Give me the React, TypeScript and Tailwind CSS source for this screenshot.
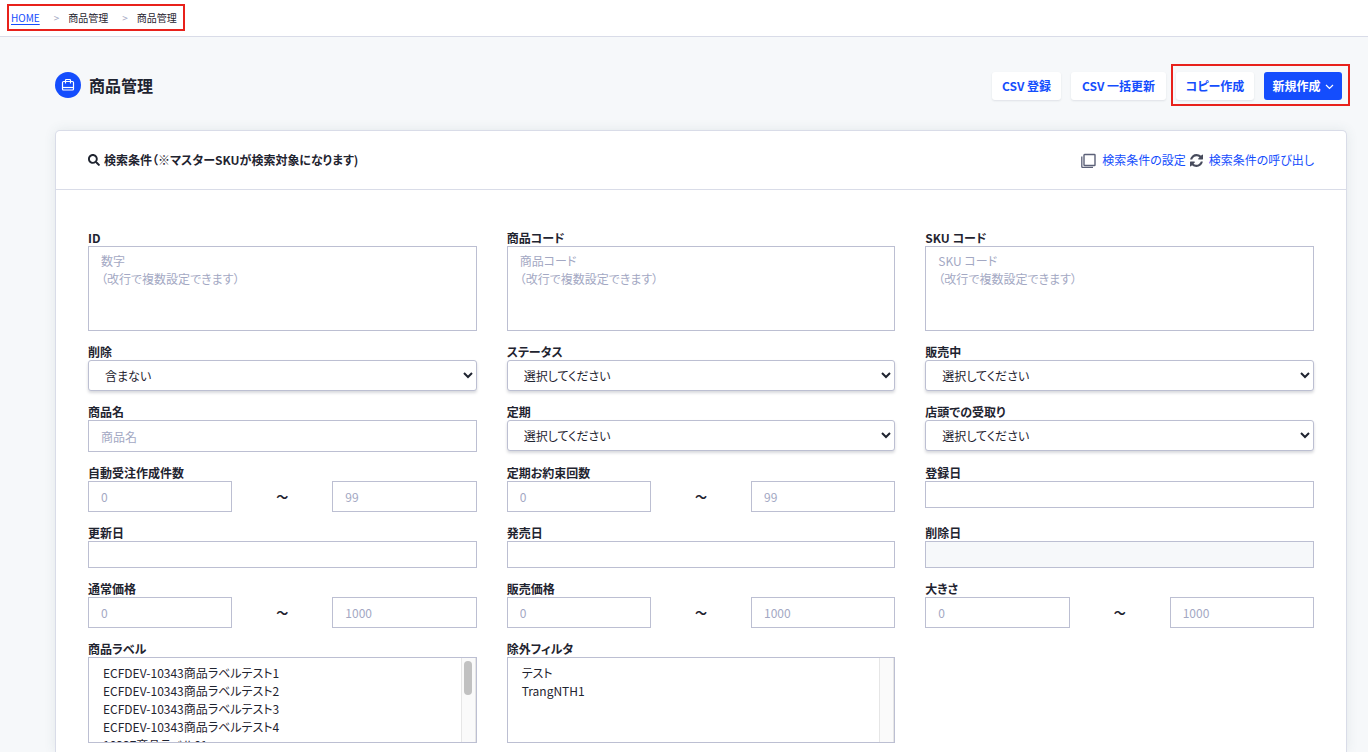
import type { ReactNode } from "react"
import { FaSearch } from "react-icons/fa"

const HINT = "（改行で複数設定できます）"

const labels = [
  "ECFDEV-10343商品ラベルテスト1",
  "ECFDEV-10343商品ラベルテスト2",
  "ECFDEV-10343商品ラベルテスト3",
  "ECFDEV-10343商品ラベルテスト4",
  "10337商品ラベル01",
  "10337商品ラベル02",
  "10337商品ラベル03",
  "10337商品ラベル04",
  "10337商品ラベル05",
  "10337商品ラベル06",
]

const excludeFilters = ["テスト", "TrangNTH1"]

const boxClass =
  "block w-full border border-[#bcbfd2] bg-white px-3 text-xs leading-[18px] text-[#1f2430] placeholder:text-[#a3a8c3] disabled:bg-[#f6f8fa]"

function Field({ id, label, children }: { id: string; label: string; children: ReactNode }) {
  return (
    <div>
      <label htmlFor={id} className="block pb-[2px] text-xs leading-[13px] font-bold">
        {label}
      </label>
      {children}
    </div>
  )
}

function AreaField({ id, label, placeholder }: { id: string; label: string; placeholder: string }) {
  return (
    <Field id={id} label={label}>
      <textarea id={id} placeholder={`${placeholder}\n${HINT}`} className={`${boxClass} h-[85px] resize-none py-[5px]`} />
    </Field>
  )
}

function SelectField({ id, label, value = "選択してください" }: { id: string; label: string; value?: string }) {
  return (
    <Field id={id} label={label}>
      <select
        id={id}
        className="block h-[31px] w-full rounded-[3px] border border-[#bcbfd2] bg-white pl-3 text-xs text-[#1f2430] shadow-[0_2px_3px_rgba(60,66,87,0.2)]"
      >
        <option>{value}</option>
      </select>
    </Field>
  )
}

function RangeField({ id, label, max }: { id: string; label: string; max: string }) {
  return (
    <Field id={`${id}-from`} label={label}>
      <div className="flex items-center">
        <div className="flex-1">
          <input id={`${id}-from`} type="text" placeholder="0" className={`${boxClass} h-[31px]`} />
        </div>
        <span className="w-[100px] text-center text-xs leading-[18px] font-bold">～</span>
        <div className="flex-1">
          <input id={`${id}-to`} type="text" placeholder={max} aria-label={`${label} 上限`} className={`${boxClass} h-[31px]`} />
        </div>
      </div>
    </Field>
  )
}

function DateField({ id, label, disabled }: { id: string; label: string; disabled?: boolean }) {
  return (
    <Field id={id} label={label}>
      <input id={id} type="text" disabled={disabled} className={`${boxClass} h-[27px]`} />
    </Field>
  )
}

function ListField({ id, label, options }: { id: string; label: string; options: string[] }) {
  return (
    <Field id={id} label={label}>
      <div className="flex h-[86px] border border-[#bcbfd2] bg-white">
        <select
          id={id}
          multiple
          className="block h-full min-w-0 flex-1 overflow-y-auto py-[6px] pl-3 text-xs text-[#1f2430] [scrollbar-width:none]"
        >
          {options.map((option) => (
            <option key={option} className="h-[18px] min-h-[18px] px-[2px] py-0 leading-[18px]">
              {option}
            </option>
          ))}
        </select>
        {/* Scroll rail, the thumb only shows when the list overflows */}
        <div className="flex w-[15px] justify-center border-x border-[#e6e6e6] bg-[#fafafa] pt-[3px]" aria-hidden="true">
          {options.length > 4 && <div className="h-[34px] w-2 rounded-full bg-[#c1c1c1]" />}
        </div>
      </div>
    </Field>
  )
}

function BriefcaseIcon() {
  return (
    <svg viewBox="0 0 14 14" className="size-[14px]" fill="none" stroke="currentColor" strokeWidth="1.2" aria-hidden="true">
      <path d="M4.500 5.600V2.300a.8.8 0 0 1 .8-.8h3.400a.8.8 0 0 1 .8.8v3.300" />
      <rect x="1.500" y="3.500" width="11" height="8.500" rx="1" />
      <path d="M1.500 9.500h11" />
    </svg>
  )
}

function CopyIcon() {
  return (
    <svg viewBox="0 0 15 15" className="size-[15px] text-[#5c6178]" fill="none" stroke="currentColor" aria-hidden="true">
      <rect x="3" y="1.500" width="11" height="11" rx=".6" strokeWidth="1.400" />
      <path d="M.8 3.500v10.200a.6.6 0 0 0 .6.6H12" strokeWidth="1.300" />
    </svg>
  )
}

function RefreshIcon() {
  return (
    <svg viewBox="0 0 1536 1536" className="size-[13px] text-[#474b5c]" fill="currentColor" aria-hidden="true">
      <path d="M1511 928q0 5-1 7-64 268-268 434.500T764 1536q-146 0-282.500-55T238 1324l-129 129q-19 19-45 19t-45-19-19-45V960q0-26 19-45t45-19h448q26 0 45 19t19 45-19 45l-137 137q71 66 161 102t187 36q134 0 250-65t186-179q11-17 53-117 8-23 30-23h192q13 0 22.500 9.500t9.500 22.500zm25-800v448q0 26-19 45t-45 19h-448q-26 0-45-19t-19-45 19-45l138-138Q969 256 768 256q-134 0-250 65T332 500q-11 17-53 117-8 23-30 23H50q-13 0-22.500-9.500T18 608v-7q65-268 270-434.500T768 0q146 0 284 55.500T1297 212l130-129q19-19 45-19t45 19 19 45z" />
    </svg>
  )
}

const whiteButton =
  "h-7 rounded-[3px] bg-white text-xs font-bold text-[#144dfd] shadow-[0_1px_2px_rgba(60,66,87,0.12)]"

export default function App() {
  return (
    <div className="min-h-screen bg-[#f6f8fa] font-['Noto_Sans_CJK_JP',sans-serif] text-[#1f2430] [font-feature-settings:'palt']">
      {/* Breadcrumb */}
      <header className="flex border-b border-[#d9dce8] bg-white px-[7px] pt-1 pb-[5px]">
        <nav className="flex items-center border-2 border-[#e8211b] py-1 pr-[6px] pl-[2px] text-[10px] leading-[15px]">
          <a href="#" className="text-[#144dfd] underline underline-offset-2">
            HOME
          </a>
          <span className="pr-[9px] pl-[14px] text-[#a3a8c3]">&gt;</span>
          <span>商品管理</span>
          <span className="pr-[9px] pl-[14px] text-[#a3a8c3]">&gt;</span>
          <span>商品管理</span>
        </nav>
      </header>

      <main className="pt-[27px] pl-[55px]">
        {/* Page title and actions */}
        <div className="flex items-center justify-between pr-[18px]">
          <div className="flex items-center gap-2">
            <span className="flex size-[26px] items-center justify-center rounded-full bg-[#144dfd] text-white">
              <BriefcaseIcon />
            </span>
            <h1 className="text-base leading-6 font-bold">商品管理</h1>
          </div>
          <div className="flex items-center">
            <div className="flex gap-[10px] pt-[2px]">
              <button type="button" className={`${whiteButton} w-[69px]`}>
                CSV 登録
              </button>
              <button type="button" className={`${whiteButton} w-[95px]`}>
                CSV 一括更新
              </button>
            </div>
            <div className="ml-[5px] flex gap-[10px] border-2 border-[#e8211b] pt-[6px] pr-[6px] pb-1 pl-[3px]">
              <button type="button" className={`${whiteButton} w-[78px]`}>
                コピー作成
              </button>
              <button
                type="button"
                className="flex h-7 w-[78px] items-center justify-center gap-1 rounded-[3px] bg-[#144dfd] text-xs font-bold text-white"
              >
                新規作成
                <svg viewBox="0 0 9 9" className="size-[9px]" fill="none" stroke="currentColor" strokeWidth="1.2" aria-hidden="true">
                  <path d="m1 3 3.500 3.500L8 3" />
                </svg>
              </button>
            </div>
          </div>
        </div>

        {/* Search conditions */}
        <section className="mt-6 mr-[21px] rounded-t-[5px] border border-b-0 border-[#d9dce8] bg-white shadow-[0_0_12px_rgba(60,90,100,0.1)]">
          <div className="flex h-[59px] items-center justify-between border-b border-[#d9dce8] px-8">
            <h2 className="flex items-center gap-1 text-xs leading-[18px] font-bold">
              <FaSearch className="size-3" />
              検索条件（※マスターSKUが検索対象になります)
            </h2>
            <div className="flex items-center gap-1 text-xs leading-[18px]">
              <a href="#" className="flex items-center gap-[6px] text-[#144dfd]">
                <CopyIcon />
                検索条件の設定
              </a>
              <a href="#" className="flex items-center gap-[6px] text-[#144dfd]">
                <RefreshIcon />
                検索条件の呼び出し
              </a>
            </div>
          </div>

          <form className="grid grid-cols-3 gap-x-[30px] gap-y-[14px] px-8 pt-[41px] pb-[9px]">
            <AreaField id="product-id" label="ID" placeholder="数字" />
            <AreaField id="product-code" label="商品コード" placeholder="商品コード" />
            <AreaField id="sku-code" label="SKU コード" placeholder="SKU コード" />

            <SelectField id="deleted" label="削除" value="含まない" />
            <SelectField id="status" label="ステータス" />
            <SelectField id="on-sale" label="販売中" />

            <Field id="product-name" label="商品名">
              <input id="product-name" type="text" placeholder="商品名" className={`${boxClass} h-8`} />
            </Field>
            <SelectField id="subscription" label="定期" />
            <SelectField id="store-pickup" label="店頭での受取り" />

            <RangeField id="auto-order" label="自動受注作成件数" max="99" />
            <RangeField id="promised-count" label="定期お約束回数" max="99" />
            <DateField id="registered-at" label="登録日" />

            <DateField id="updated-at" label="更新日" />
            <DateField id="released-at" label="発売日" />
            <DateField id="deleted-at" label="削除日" disabled />

            <RangeField id="regular-price" label="通常価格" max="1000" />
            <RangeField id="sale-price" label="販売価格" max="1000" />
            <RangeField id="size" label="大きさ" max="1000" />

            <ListField id="product-label" label="商品ラベル" options={labels} />
            <ListField id="exclude-filter" label="除外フィルタ" options={excludeFilters} />
          </form>
        </section>
      </main>
    </div>
  )
}
